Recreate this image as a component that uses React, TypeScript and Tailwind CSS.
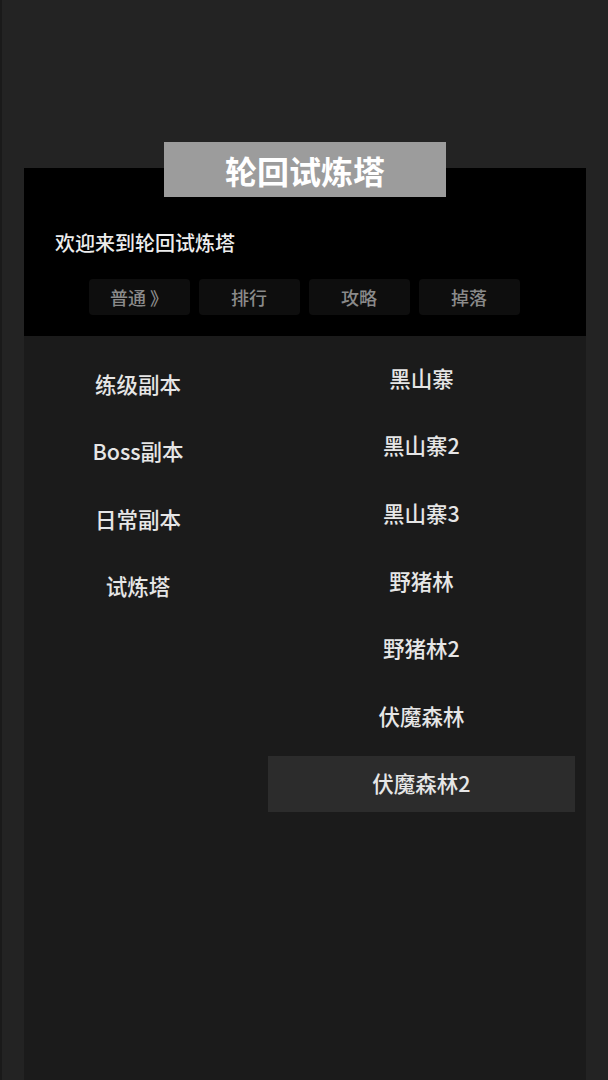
import React from 'react';

const FONT = "font-['Noto_Sans_CJK_SC','Noto_Sans',sans-serif]";

const tabs = ['普通 》', '排行', '攻略', '掉落'];
const categories = ['练级副本', 'Boss副本', '日常副本', '试炼塔'];
const stages = ['黑山寨', '黑山寨2', '黑山寨3', '野猪林', '野猪林2', '伏魔森林', '伏魔森林2'];

export default function App() {
  const selected = '伏魔森林2';

  return (
    <div className={`min-h-screen bg-[#232323] border-l-2 border-[#1a1a1a] pt-[142px] pl-[22px] pr-[22px] ${FONT}`}>
      {/* Title tag */}
      <div className="relative z-10 mx-auto flex h-[55px] w-[282px] items-center justify-center bg-[#9c9c9c]">
        <span className="text-[32px] font-semibold text-white leading-none">轮回试炼塔</span>
      </div>

      {/* Header */}
      <div className="-mt-[29px] h-[168px] bg-black pt-[61px]">
        <p className="pl-[31px] text-[20px] font-medium leading-[28px] text-[#ededed]">欢迎来到轮回试炼塔</p>
        <div className="mt-[22px] flex justify-center gap-[9px] pr-[2px]">
          {tabs.map((t) => (
            <div
              key={t}
              className="flex h-[36px] w-[101px] items-center justify-center rounded-[4px] bg-[#0e0e0e] text-[18px] font-medium text-[#8a8a8a]"
            >
              {t}
            </div>
          ))}
        </div>
      </div>

      {/* Body */}
      <div className="flex h-[744px] bg-[#1b1b1b] pt-[14px] pr-[11px]">
        <div className="w-[228px] flex flex-col">
          {categories.map((c) => (
            <div key={c} className="flex h-[67.5px] items-center justify-center text-[21.5px] font-medium text-[#e6e6e6]">
              {c}
            </div>
          ))}
        </div>
        <div className="ml-[16px] flex w-[307px] flex-col gap-[11.6px]">
          {stages.map((s) => (
            <div
              key={s}
              className={`flex h-[56px] items-center justify-center text-[21.5px] font-medium text-[#e6e6e6] ${
                s === selected ? 'bg-[#2c2c2c]' : ''
              }`}
            >
              {s}
            </div>
          ))}
        </div>
      </div>
    </div>
  );
}
